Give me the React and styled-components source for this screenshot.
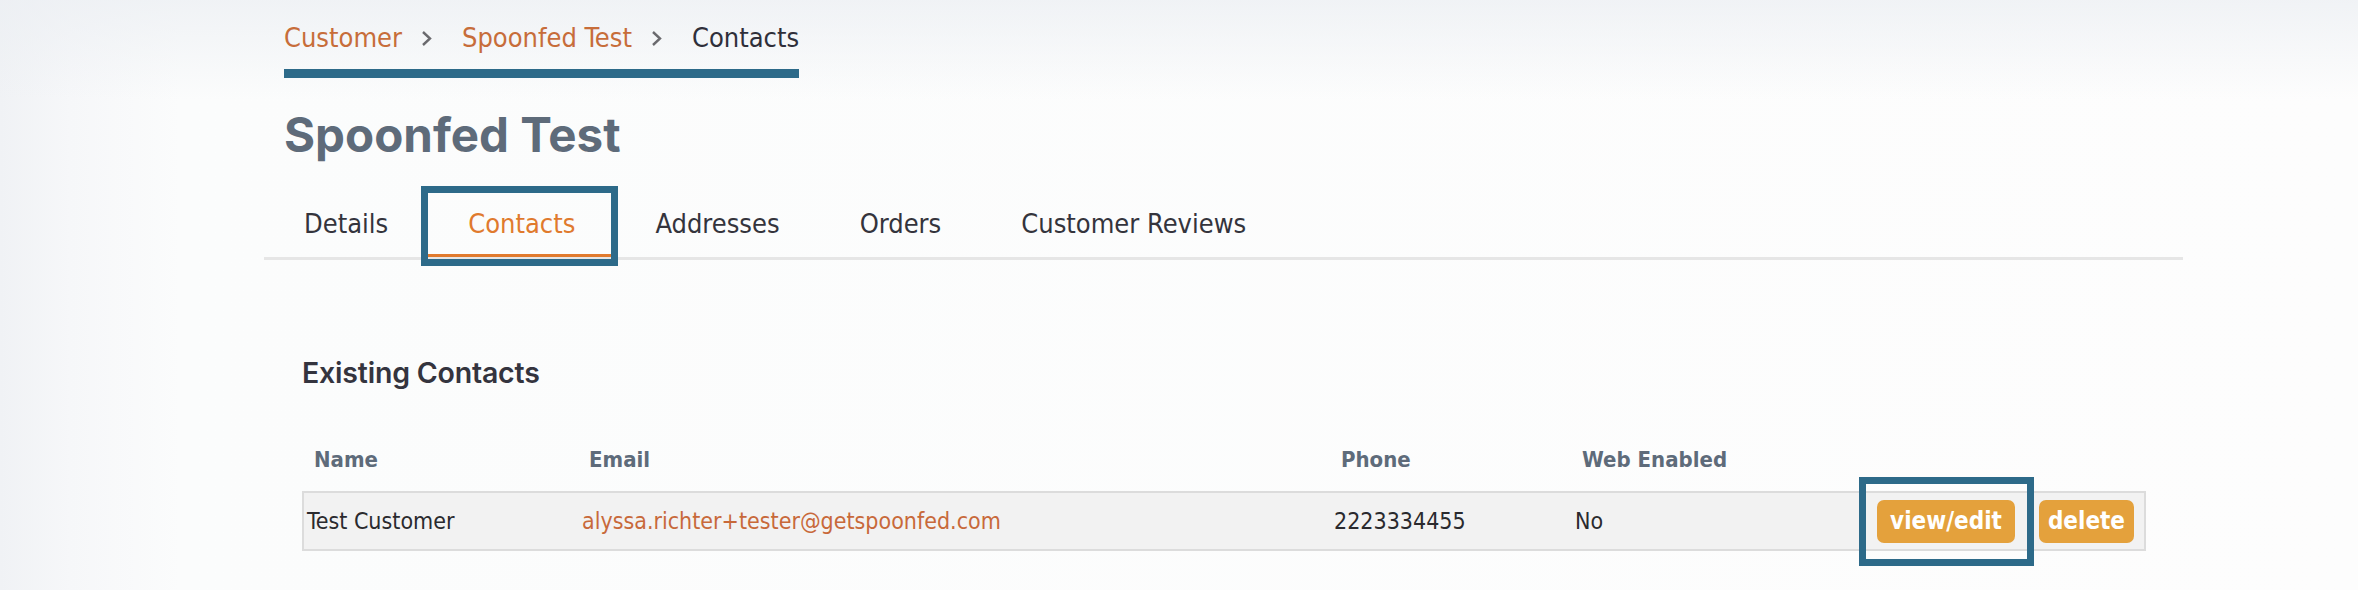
import React from "react";
import styled, { createGlobalStyle, css } from "styled-components";

const GlobalStyle = createGlobalStyle`
  html, body { margin: 0; padding: 0; }
  body {
    background: #fdfdfd;
    font-family: "DejaVu Sans Condensed", "DejaVu Sans", sans-serif;
  }
`;

const ANNOT = "#2d6a89";
const condensed = css`
  font-family: "DejaVu Sans Condensed", "DejaVu Sans", sans-serif;
  font-stretch: condensed;
`;

const Page = styled.div`
  min-height: 590px;
  box-sizing: border-box;
  padding: 22px 175px 0 264px;
  background:
    linear-gradient(to bottom, rgba(236, 239, 243, 0.75) 0px, rgba(252, 252, 253, 0) 100px),
    linear-gradient(to right, #f0f2f5 0px, #f6f7f9 70px, #fbfcfc 180px, #fdfdfd 100%);
`;

const Breadcrumb = styled.nav`
  display: inline-flex;
  align-items: center;
  margin-left: 20px;
  padding-bottom: 15px;
  border-bottom: 9px solid ${ANNOT};
  ${condensed};
  font-size: 27px;
  line-height: 32px;
`;

const CrumbLink = styled.a`
  color: #c76d3a;
  text-decoration: none;
`;

const CrumbCurrent = styled.span`
  color: #2f2f3a;
`;

const SepIcon = styled.svg`
  display: block;
  margin: 0 30px 0 19px;
  width: 11px;
  height: 17px;
`;

const Sep = () => (
  <SepIcon viewBox="0 0 11 17" aria-hidden="true">
    <polyline points="2,2 9,8.5 2,15" fill="none" stroke="#6a6a6e" strokeWidth="2.4" />
  </SepIcon>
);

const Title = styled.h1`
  margin: 29px 0 0 20px;
  font-family: Inter, "Liberation Sans", sans-serif;
  font-weight: 700;
  font-size: 47.5px;
  line-height: 56px;
  color: #5e6b7a;
`;

const TabList = styled.div`
  display: flex;
  margin-top: 30px;
  border-bottom: 3px solid #e6e6e6;
`;

const Tab = styled.div`
  position: relative;
  display: flex;
  align-items: center;
  box-sizing: border-box;
  height: 64px;
  padding: 0 40px;
  ${condensed};
  font-size: 27px;
  color: ${(p) => (p.$active ? "#e07a2e" : "#34343c")};
  border-bottom: 3px solid ${(p) => (p.$active ? "#e07a2e" : "transparent")};
  ${(p) =>
    p.$highlight &&
    css`
      &::after {
        content: "";
        position: absolute;
        top: -7px;
        right: -3px;
        bottom: -12px;
        left: -7px;
        border: 7px solid ${ANNOT};
        pointer-events: none;
      }
    `}
`;

const Section = styled.section`
  padding: 96px 37px 0 38px;
`;

const SectionTitle = styled.h2`
  margin: 0;
  font-family: Inter, "Liberation Sans", sans-serif;
  font-weight: 600;
  font-size: 28.5px;
  line-height: 34px;
  letter-spacing: -0.2px;
  color: #34343e;
`;

const Table = styled.div`
  margin-top: 52px;
`;

const gridCols = css`
  display: grid;
  grid-template-columns: 275px 752px 241px 1fr auto;
  align-items: center;
`;

const HeaderRow = styled.div`
  ${gridCols};
  border: 2px solid transparent;
`;

const HeaderCell = styled.div`
  padding-left: 10px;
  ${condensed};
  font-weight: 700;
  font-size: 22px;
  line-height: 32px;
  color: #5e6b7a;
`;

const Row = styled.div`
  ${gridCols};
  margin-top: 13px;
  min-height: 56px;
  border: 2px solid #dcdcdc;
  background: #f2f2f2;
`;

const Cell = styled.div`
  padding-left: 3px;
  ${condensed};
  font-size: 23px;
  line-height: 28px;
  color: ${(p) => (p.$link ? "#c8693a" : "#2a2a2e")};
`;

const Actions = styled.div`
  display: flex;
  gap: 24px;
  padding-right: 10px;
`;

const ActionButton = styled.button`
  position: relative;
  height: 43px;
  padding: 0 ${(p) => (p.$wide ? 13 : 9)}px;
  border: none;
  border-radius: 7px;
  background: #e4a13c;
  color: #ffffff;
  ${condensed};
  font-weight: 700;
  font-size: 24px;
  cursor: pointer;
  ${(p) =>
    p.$highlight &&
    css`
      &::after {
        content: "";
        position: absolute;
        top: -23px;
        right: -19px;
        bottom: -23px;
        left: -18px;
        border: 7px solid ${ANNOT};
        pointer-events: none;
      }
    `}
`;

const tabs = ["Details", "Contacts", "Addresses", "Orders", "Customer Reviews"];

const contacts = [
  {
    name: "Test Customer",
    email: "alyssa.richter+tester@getspoonfed.com",
    phone: "2223334455",
    web: "No",
  },
];

export default function App() {
  return (
    <>
      <GlobalStyle />
      <Page>
        <Breadcrumb>
          <CrumbLink href="#">Customer</CrumbLink>
          <Sep />
          <CrumbLink href="#">Spoonfed Test</CrumbLink>
          <Sep />
          <CrumbCurrent>Contacts</CrumbCurrent>
        </Breadcrumb>
        <Title>Spoonfed Test</Title>
        <TabList>
          {tabs.map((t) => (
            <Tab key={t} $active={t === "Contacts"} $highlight={t === "Contacts"}>
              {t}
            </Tab>
          ))}
        </TabList>
        <Section>
          <SectionTitle>Existing Contacts</SectionTitle>
          <Table>
            <HeaderRow>
              <HeaderCell>Name</HeaderCell>
              <HeaderCell>Email</HeaderCell>
              <HeaderCell>Phone</HeaderCell>
              <HeaderCell>Web Enabled</HeaderCell>
              <div />
            </HeaderRow>
            {contacts.map((c) => (
              <Row key={c.email}>
                <Cell>{c.name}</Cell>
                <Cell $link>{c.email}</Cell>
                <Cell>{c.phone}</Cell>
                <Cell>{c.web}</Cell>
                <Actions>
                  <ActionButton $highlight $wide>view/edit</ActionButton>
                  <ActionButton>delete</ActionButton>
                </Actions>
              </Row>
            ))}
          </Table>
        </Section>
      </Page>
    </>
  );
}
